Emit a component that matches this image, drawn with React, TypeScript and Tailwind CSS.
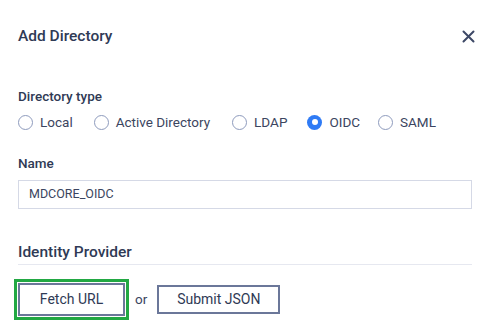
import React from "react";

function Radio({ label, checked }: { label: string; checked?: boolean }) {
  return (
    <label className="flex items-center gap-[7px]">
      {checked ? (
        <span className="flex h-[15px] w-[15px] items-center justify-center rounded-full bg-[#2f7bf5]">
          <span className="h-[6px] w-[6px] rounded-full bg-white" />
        </span>
      ) : (
        <span className="h-[15px] w-[15px] rounded-full border border-[#8e9bbd] bg-white" />
      )}
      <span className="text-[13.5px] leading-5 text-[#3b4560]">{label}</span>
    </label>
  );
}

export default function App() {
  return (
    <div
      className="h-[327px] w-[487px] overflow-hidden bg-white pl-[18px] pr-[15px]"
      style={{ fontFamily: "Roboto, 'Noto Sans', sans-serif" }}
    >
      <div className="flex h-[72px] items-center justify-between">
        <h1 className="text-[15.5px] font-medium leading-5 text-[#2f3a55]">Add Directory</h1>
        <svg width="13" height="13" viewBox="0 0 13 13" className="mr-[-3px]">
          <path d="M1.5 1.5 L11.5 11.5 M11.5 1.5 L1.5 11.5" stroke="#3d4866" strokeWidth="2" strokeLinecap="round" />
        </svg>
      </div>
      <div className="mt-[14px] text-[13.5px] font-medium leading-5 text-[#2f3a55]">Directory type</div>
      <div className="mt-[6px] flex items-center">
        <div className="mr-[21px]"><Radio label="Local" /></div>
        <div className="mr-[22px]"><Radio label="Active Directory" /></div>
        <div className="mr-[20px]"><Radio label="LDAP" /></div>
        <div className="mr-[18px]"><Radio label="OIDC" checked /></div>
        <Radio label="SAML" />
      </div>
      <div className="mt-[21px] text-[13.5px] font-medium leading-5 text-[#2f3a55]">Name</div>
      <div className="mt-[7px] flex h-[29px] items-center border border-[#d5d9e6] px-[10px] text-[12.5px] text-[#3b4560]">
        MDCORE_OIDC
      </div>
      <div className="mt-[33px] border-b border-[#e6e8f0] pb-[2px] text-[15.5px] font-medium leading-5 text-[#2f3a55]">
        Identity Provider
      </div>
      <div className="mt-[14px] ml-[-4px] flex items-center">
        <div className="border-[3px] border-[#22a843] p-[1px]">
          <button className="flex h-[33px] w-[107px] items-center justify-center border-2 border-[#6b7799] text-[14px] text-[#2f3a55]">
            Fetch URL
          </button>
        </div>
        <span className="ml-[6px] text-[13.5px] text-[#3b4560]">or</span>
        <button className="ml-[10px] flex h-[29px] w-[123px] items-center justify-center border-2 border-[#6b7799] text-[14px] text-[#2f3a55]">
          Submit JSON
        </button>
      </div>
    </div>
  );
}
